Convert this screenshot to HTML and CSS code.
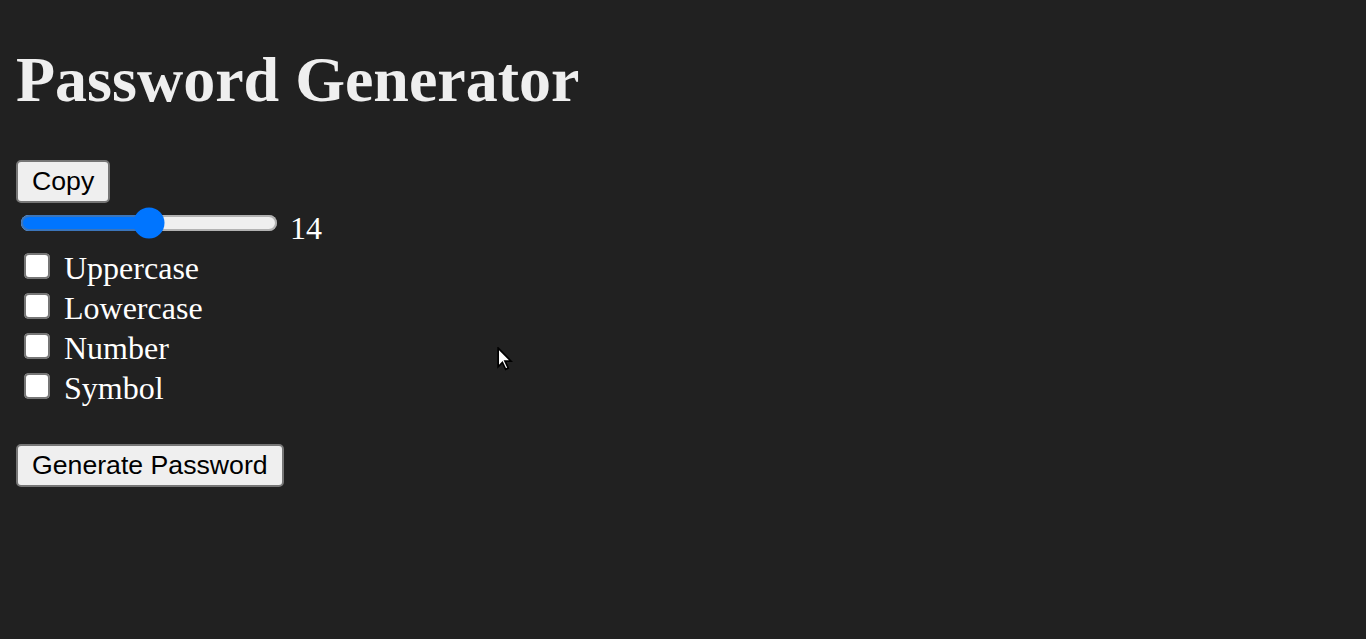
FILE: index.html
```html
<!DOCTYPE html>
<html lang="en">
<head>
<meta charset="utf-8">
<title>Password Generator</title>
<link rel="stylesheet" href="styles.css">
</head>
<body>
<h1 class="title">Password Generator</h1>
<div class="row"><span class="password"></span><button class="btn">Copy</button></div>
<div class="row"><input class="slider" type="range" min="4" max="24" value="14"><span class="length">14</span></div>
<div class="row"><input type="checkbox" id="up"><label class="opt" for="up">Uppercase</label></div>
<div class="row"><input type="checkbox" id="low"><label class="opt" for="low">Lowercase</label></div>
<div class="row"><input type="checkbox" id="num"><label class="opt" for="num">Number</label></div>
<div class="row"><input type="checkbox" id="sym"><label class="opt" for="sym">Symbol</label></div>
<br>
<button class="btn">Generate Password</button>
<svg class="cursor" width="8" height="12.5" viewBox="0 0 12 19"><path d="M0.8 0.8 L0.8 15 L4 11.7 L6.5 17 L8.5 16 L6 10.8 L10.6 10.8 Z" fill="#fff" stroke="#000" stroke-width="1.3"/></svg>
</body>
</html>
```
FILE: styles.css
```css
html {
  zoom: 2;
  background: #212121;
}
body {
  margin: 8px;
  font-family: "Liberation Serif", "Times New Roman", serif;
  font-size: 16px;
  color: #ffffff;
}
.title {
  color: #efefef;
  font-size: 32px;
  margin: 13.44px 0 21.44px;
}
.btn {
  font-family: "Liberation Sans", Arial, sans-serif;
  font-size: 13.333px;
}
.length,
.opt {
  margin-left: 4px;
}
.cursor {
  position: fixed;
  left: 248.5px;
  top: 173.5px;
}
```
